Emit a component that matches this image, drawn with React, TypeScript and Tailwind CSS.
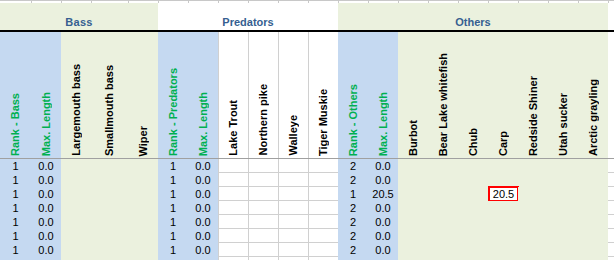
import React from "react";

type Col = { w: string; bg: "blue" | "beige" | "white"; label: string; green?: boolean };

const cols: Col[] = [
  { w: "w-[31px]", bg: "blue", label: "Rank - Bass", green: true },
  { w: "w-[30px]", bg: "blue", label: "Max. Length", green: true },
  { w: "w-[30px]", bg: "beige", label: "Largemouth bass" },
  { w: "w-[37px]", bg: "beige", label: "Smallmouth bass" },
  { w: "w-[30px]", bg: "beige", label: "Wiper" },
  { w: "w-[30px]", bg: "blue", label: "Rank - Predators", green: true },
  { w: "w-[30px]", bg: "blue", label: "Max. Length", green: true },
  { w: "w-[30px]", bg: "white", label: "Lake Trout" },
  { w: "w-[30px]", bg: "white", label: "Northern pike" },
  { w: "w-[30px]", bg: "white", label: "Walleye" },
  { w: "w-[30px]", bg: "white", label: "Tiger Muskie" },
  { w: "w-[30px]", bg: "blue", label: "Rank - Others", green: true },
  { w: "w-[30px]", bg: "blue", label: "Max. Length", green: true },
  { w: "w-[30px]", bg: "beige", label: "Burbot" },
  { w: "w-[30px]", bg: "beige", label: "Bear Lake whitefish" },
  { w: "w-[30px]", bg: "beige", label: "Chub" },
  { w: "w-[30px]", bg: "beige", label: "Carp" },
  { w: "w-[30px]", bg: "beige", label: "Redside Shiner" },
  { w: "w-[30px]", bg: "beige", label: "Utah sucker" },
  { w: "w-[30px]", bg: "beige", label: "Arctic grayling" },
];

const bgClass = (bg: Col["bg"]) =>
  bg === "blue"
    ? "bg-[#c5d9f1]"
    : bg === "beige"
    ? "bg-[#ebf1de]"
    : "bg-white border-l border-[#d0d0d0]";

const othersRank = ["2", "2", "1", "2", "2", "2", "2"];
const othersLen = ["0.0", "0.0", "20.5", "0.0", "0.0", "0.0", "0.0"];

function cellValue(ci: number, ri: number): string {
  if (ri > 6) return "";
  if (ci === 0 || ci === 5) return "1";
  if (ci === 1 || ci === 6) return "0.0";
  if (ci === 11) return othersRank[ri];
  if (ci === 12) return othersLen[ri];
  return "";
}

export default function App() {
  return (
    <div className="w-[614px] h-[260px] overflow-hidden bg-white font-['Liberation_Sans',Arial,sans-serif] text-black">
      {/* top strip of previous row */}
      <div className="flex h-[3px] border-t border-[#c8c8c8]">
        {cols.map((c, i) => (
          <div key={i} className={`${c.w} h-full ${i > 0 ? "border-l border-[#c8c8c8]" : ""}`} />
        ))}
        <div className="w-[6px] h-full border-l border-[#c8c8c8]" />
      </div>

      {/* group header row */}
      <div className="flex h-[29px] border-b-2 border-black">
        <div className="w-[158px] bg-[#ebf1de] flex items-end justify-center pb-[1px]">
          <span className="text-[11px] font-bold leading-[13px] text-[#365f91] tracking-[0.3px]">Bass</span>
        </div>
        <div className="w-[180px] bg-white flex items-end justify-center pb-[1px]">
          <span className="text-[11px] font-bold leading-[13px] text-[#365f91]">Predators</span>
        </div>
        <div className="w-[270px] bg-[#ebf1de] flex items-end justify-center pb-[1px]">
          <span className="text-[11px] font-bold leading-[13px] text-[#365f91]">Others</span>
        </div>
        <div className="w-[6px] bg-white" />
      </div>

      {/* vertical header row */}
      <div className="flex h-[127px] border-b border-[#a0a0a0]">
        {cols.map((c, i) => (
          <div
            key={i}
            className={`${c.w} h-full flex flex-col justify-end items-center pb-[2px] ${bgClass(c.bg)}`}
          >
            <div
              className={`[writing-mode:vertical-rl] rotate-180 whitespace-nowrap text-[11px] font-bold leading-[13px] ${
                c.green ? "text-[#00b050]" : "text-black"
              }`}
            >
              {c.label}
            </div>
          </div>
        ))}
        <div className="w-[6px] h-full bg-white" />
      </div>

      {/* data rows */}
      {Array.from({ length: 8 }).map((_, ri) => (
        <div key={ri} className="flex h-[14px]">
          {cols.map((c, ci) => {
            const v = cellValue(ci, ri);
            const isCarp = ci === 16 && ri === 2;
            return (
              <div
                key={ci}
                className={`${c.w} h-full relative flex items-center justify-center text-[11px] leading-[14px] ${bgClass(
                  c.bg
                )} ${c.bg === "white" ? "border-b" : ""}`}
              >
                {v}
                {isCarp && (
                  <div className="absolute -top-[1px] -bottom-[1px] left-0 -right-[1px] border-2 border-[#ff0000] bg-white flex items-center justify-center text-[11px] leading-[12px]">
                    20.5
                  </div>
                )}
              </div>
            );
          })}
          <div className="w-[6px] h-full bg-white border-b border-[#d0d0d0]" />
        </div>
      ))}
    </div>
  );
}
